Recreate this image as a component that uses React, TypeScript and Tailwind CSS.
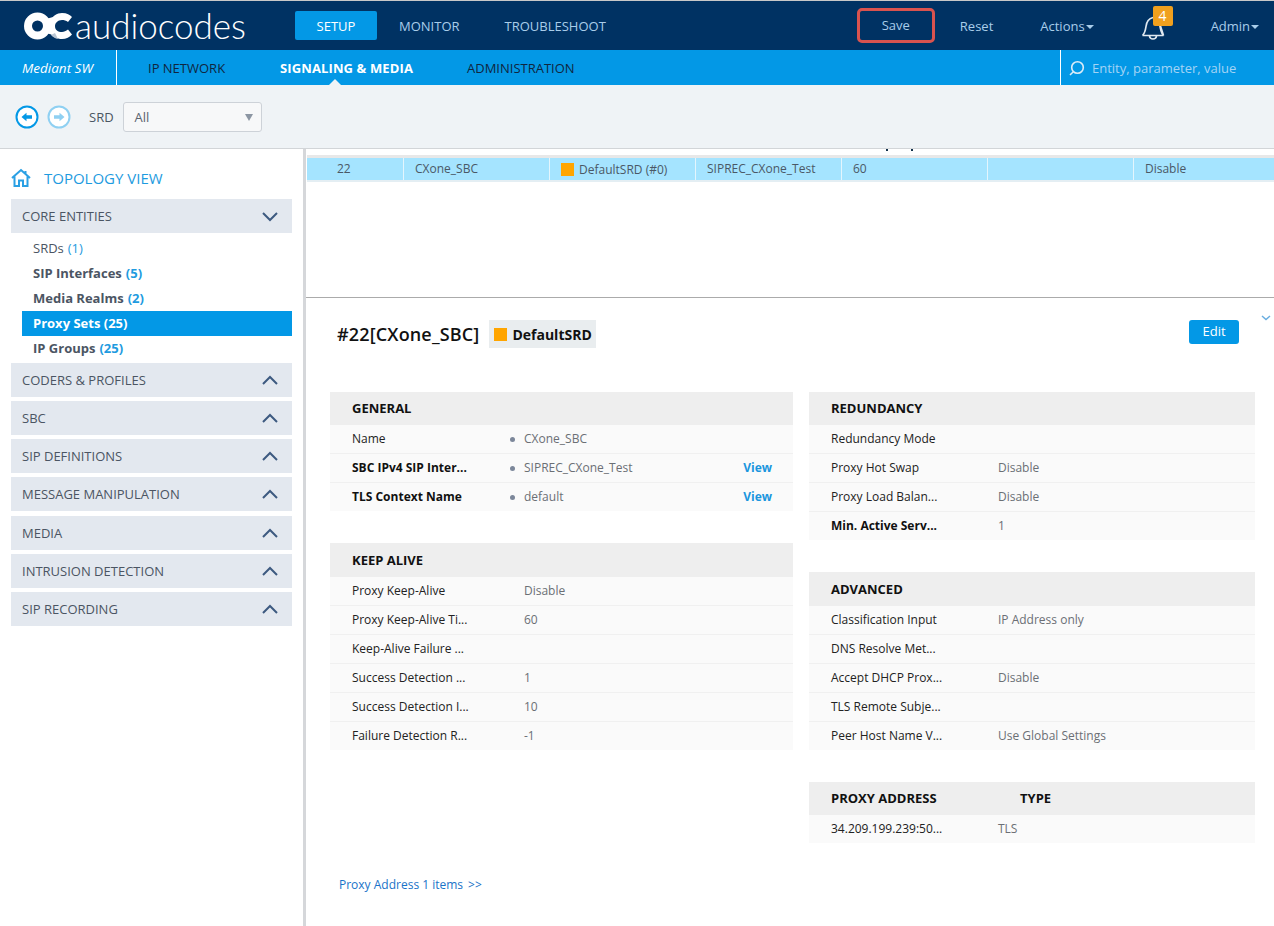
import React from "react";

type Row = { k: string; v?: string; bold?: boolean; dot?: boolean; view?: boolean };

const Chevron = ({ up }: { up: boolean }) => (
  <svg width="16" height="10" viewBox="0 0 16 10" fill="none" stroke="#3d5a80" strokeWidth="2" className={up ? "-mt-[2px]" : ""}>
    <path d={up ? "M1 9 L8 2 L15 9" : "M1 1 L8 8 L15 1"} />
  </svg>
);

const Logo = () => (
  <div className="flex items-center w-[222px]">
    <svg width="50" height="28" viewBox="0 0 50 28" className="shrink-0">
      <circle cx="13.500" cy="14" r="9.500" fill="none" stroke="#fff" strokeWidth="8" />
      <path d="M22 7 L29 5 L27 14 L29 23 L22 21 Z" fill="#fff" />
      <path d="M26 10 C28 4 33 1 38 1 C43 1 46 3 48 5 L44 10 C42 8.500 40 8 38 8 C34 8 31 11 31 14 C31 18 34 20 38 20 C40 20 42 19 44 17.500 L48 22.500 C46 25 42 27 38 27 C33 27 28 25 26 20 Z" fill="#fff" />
      <path d="M27 23 C29 25 31 26.500 34 27 L31 21 Z" fill="#b9c6d4" />
    </svg>
    <span className="font-['Lato'] font-light text-[35px] leading-none text-white ml-[1px] -mt-[1px]">audiocodes</span>
  </div>
);

const Section = ({ title, rows, cols }: { title: React.ReactNode; rows: Row[]; cols: string }) => (
  <div>
    <div className="h-[33.5px] bg-[#eeeeee] flex items-center pl-[22px] pt-[1px] text-[13px] font-bold text-[#111]">{title}</div>
    {rows.map((r, i) => (
      <div key={r.k} className={`bg-[#fafafa] flex items-center pl-[22px] text-[12px] ${i < rows.length - 1 ? "h-[29px] border-b border-[#f0f0f0]" : "h-[28px]"}`}>
        <div className={`${cols} shrink-0 ${r.bold ? "font-bold text-[#111]" : "text-[#222]"}`}>{r.k}</div>
        {r.dot && <span className="w-[5px] h-[5px] rounded-full bg-[#7c879a] mr-[9px] shrink-0" />}
        <div className="text-[#6b6f75] flex-1">{r.v}</div>
        {r.view && <div className="font-bold text-[#1a96de] pr-[21px]">View</div>}
      </div>
    ))}
  </div>
);

const cells: { w: string; node: React.ReactNode }[] = [
  { w: "w-[97px] pl-[30px]", node: "22" },
  { w: "w-[146px] pl-[11px]", node: "CXone_SBC" },
  {
    w: "w-[146px] pl-[11px]",
    node: (
      <span className="flex items-center">
        <span className="w-[13px] h-[13px] bg-[#ffa500] mr-[5px]" />
        <span className="mt-[1px]">DefaultSRD (#0)</span>
      </span>
    ),
  },
  { w: "w-[146px] pl-[11px]", node: "SIPREC_CXone_Test" },
  { w: "w-[146px] pl-[11px]", node: "60" },
  { w: "w-[146px]", node: "" },
  { w: "flex-1 pl-[11px]", node: "Disable" },
];

export default function App() {
  const others = ["CODERS & PROFILES", "SBC", "SIP DEFINITIONS", "MESSAGE MANIPULATION", "MEDIA", "INTRUSION DETECTION", "SIP RECORDING"];
  const navItems = [
    { label: "SIP Interfaces", n: "(5)" },
    { label: "Media Realms", n: "(2)" },
  ];
  return (
    <div className="w-[1274px] h-[926px] overflow-hidden bg-white font-['Open_Sans',sans-serif] flex flex-col border-t border-[#c8c8c8]">
      {/* top bar */}
      <header className="h-[49px] shrink-0 bg-[#003263] flex items-center pl-[24px] text-[13px] text-[#a9cdea]">
        <Logo />
        <div className="ml-[49px] w-[82px] h-[29px] rounded-[2px] bg-[#0398e6] flex items-center justify-center pt-[2px] text-white">SETUP</div>
        <div className="ml-[22px] pt-[2px]">MONITOR</div>
        <div className="ml-[45px] pt-[2px]">TROUBLESHOOT</div>
        <div className="ml-[251px] w-[78px] h-[35px] rounded-[5px] border-[3px] border-[#d9534f] flex items-center justify-center">Save</div>
        <div className="ml-[25px] pt-[2px]">Reset</div>
        <div className="ml-[47px] pt-[2px] flex items-center">
          Actions
          <span className="ml-[1px] w-0 h-0 border-x-[4px] border-x-transparent border-t-[4px] border-t-[#a9cdea]" />
        </div>
        <div className="ml-[47px] relative w-[24px] h-[24px] mt-[4px]">
          <svg width="24" height="24" viewBox="0 0 24 24" fill="none" stroke="#dfe8f0" strokeWidth="1.700">
            <path d="M1.500 19.500 C4 17 4.500 14 5 10.500 C5.500 6 8 2.500 12 1.500 M18.500 7 C19 12 19.500 16.500 22.500 19.500 Z M1.500 19.500 H22.500" />
            <path d="M8.500 20 C9 24 15 24 15.500 20" />
          </svg>
          <div className="absolute -top-[10px] left-[12px] w-[20px] h-[20px] rounded-[2px] bg-[#f0a01e] text-white text-[14px] flex items-center justify-center">4</div>
        </div>
        <div className="ml-[46px] pt-[2px] flex items-center">
          Admin
          <span className="ml-[1px] w-0 h-0 border-x-[4px] border-x-transparent border-t-[4px] border-t-[#a9cdea]" />
        </div>
      </header>

      {/* sub bar */}
      <div className="h-[35px] shrink-0 bg-[#0398e6] flex text-[13px] text-[#10263f]">
        <div className="w-[117px] border-r border-white flex items-center pl-[22px] pt-[2px] italic text-white text-[13.500px]">Mediant SW</div>
        <div className="flex items-center pl-[31px] pt-[2px] w-[163px]">IP NETWORK</div>
        <div className="flex items-center pt-[2px] relative w-[187px] font-bold text-white tracking-[0.12px]">
          SIGNALING &amp; MEDIA
          <span className="absolute bottom-0 left-[49px] w-0 h-0 border-x-[6px] border-x-transparent border-b-[6px] border-b-[#eff3f6]" />
        </div>
        <div className="flex items-center pt-[2px] w-[593px]">ADMINISTRATION</div>
        <div className="flex-1 border-l border-white flex items-center pl-[7px] pt-[2px] text-[#a3d4f5]">
          <svg width="17" height="17" viewBox="0 0 17 17" fill="none" stroke="#dcecf8" strokeWidth="1.600" className="mr-[7px]">
            <circle cx="9.500" cy="7.500" r="5.800" />
            <path d="M5.300 11.800 L2 15" />
          </svg>
          Entity, parameter, value
        </div>
      </div>

      {/* toolbar */}
      <div className="h-[64px] shrink-0 bg-[#eff3f6] border-b border-[#d2d5d8] flex items-center pl-[15px] pt-[1px]">
        <svg width="24" height="24" viewBox="0 0 24 24" className="shrink-0">
          <circle cx="12" cy="12" r="10.500" fill="#fff" stroke="#0398e6" strokeWidth="2" />
          <path d="M6.500 12 L11.500 7.800 V10.300 H17 V13.700 H11.500 V16.200 Z" fill="#0398e6" />
        </svg>
        <svg width="24" height="24" viewBox="0 0 24 24" className="shrink-0 ml-[8px]">
          <circle cx="12" cy="12" r="10.500" fill="#fff" stroke="#8fd0f2" strokeWidth="2" />
          <path d="M17.500 12 L12.500 7.800 V10.300 H7 V13.700 H12.500 V16.200 Z" fill="#8fd0f2" />
        </svg>
        <span className="ml-[18px] pt-[2px] text-[13px] text-[#4a5662]">SRD</span>
        <div className="ml-[9px] w-[139px] h-[30px] rounded-[3px] border border-[#cdd2d8] bg-[#f7f8f9] flex items-center pl-[11px] pr-[8px] text-[13px] text-[#5a6470] justify-between">
          <span className="pt-[1px]">All</span>
          <span className="w-0 h-0 border-x-[4px] border-x-transparent border-t-[7px] border-t-[#8c96a3]" />
        </div>
      </div>

      <div className="flex-1 flex min-h-0">
        {/* sidebar */}
        <aside className="w-[303px] shrink-0 pl-[11px] pr-[11px] flex flex-col">
          <div className="h-[50px] flex items-center pt-[9px] text-[15px] text-[#1e9be0]">
            <svg width="20" height="19" viewBox="0 0 20 19" fill="none" stroke="#2aa0e4" strokeWidth="2" className="mr-[13px] -mt-[2px]">
              <path d="M1 10 L10 2 L19 10 M3.500 8.500 V18 H8 V12.500 H12 V18 H16.500 V8.500 M14.500 3 V5.500" />
            </svg>
            TOPOLOGY VIEW
          </div>
          <div className="h-[34px] bg-[#e3e8ef] flex items-center justify-between pl-[11px] pr-[14px] pt-[1px] text-[13px] text-[#4b5563]">
            CORE ENTITIES
            <Chevron up={false} />
          </div>
          <div className="mt-[3px] pl-[11px] flex flex-col text-[13px] text-[#4b5563]">
            <div className="h-[25px] pl-[11px] flex items-center">
              SRDs<span className="ml-[4px] text-[#1e9be0]">(1)</span>
            </div>
            {navItems.map((n) => (
              <div key={n.label} className="h-[25px] pl-[11px] flex items-center font-bold">
                {n.label}
                <span className="ml-[4px] text-[#1e9be0]">{n.n}</span>
              </div>
            ))}
            <div className="h-[25px] pl-[11px] flex items-center font-bold text-white bg-[#0398e6]">Proxy Sets (25)</div>
            <div className="h-[25px] pl-[11px] flex items-center font-bold">
              IP Groups<span className="ml-[4px] text-[#1e9be0]">(25)</span>
            </div>
          </div>
          <div className="mt-[2px] flex flex-col gap-[4px]">
            {others.map((t) => (
              <div key={t} className={`h-[34px] bg-[#e3e8ef] flex items-center justify-between pl-[11px] pr-[14px] pt-[1px] text-[13px] text-[#4b5563] ${t === "MEDIA" ? "mt-[1px]" : ""}`}>
                {t}
                <Chevron up />
              </div>
            ))}
          </div>
        </aside>

        {/* main */}
        <main className="flex-1 min-w-0 border-l-[3px] border-[#d5d7da] flex flex-col">
          <div className="h-[149px] shrink-0 border-b border-[#ababab] pl-[1px]">
            <div className="h-[2px] flex">
              <span className="ml-[579px] w-[2px] bg-[#12304a]" />
              <span className="ml-[23px] w-[2px] bg-[#12304a]" />
            </div>
            <div className="h-[3px] mt-[1px] bg-white" />
            <div className="h-[3px] bg-[#e8e8e8]" />
            <div className="h-[24px] bg-[#a5e4ff] border-b-[2px] border-[#e4eef3] flex text-[12px] text-[#4a5866]">
              {cells.map((c, i) => (
                <div key={i} className={`${c.w} flex items-center ${i < cells.length - 1 ? "border-r-[1px] border-[#e4f5fd]" : ""}`}>
                  {c.node}
                </div>
              ))}
            </div>
          </div>

          <div className="pl-[24px] pr-[19px] relative">
            <div className="h-[93.700px] flex items-start pt-[22px] pl-[7px]">
              <div className="text-[18px] font-semibold text-[#111] leading-[28px] tracking-[0.15px]">#22[CXone_SBC]</div>
              <div className="ml-[10px] h-[28px] w-[107px] bg-[#e9edef] flex items-center pl-[5px] text-[14px] font-bold text-[#111]">
                <span className="w-[13px] h-[13px] bg-[#ffa500] mr-[5px]" />
                DefaultSRD
              </div>
              <div className="ml-auto mr-[16px] w-[50px] h-[24px] rounded-[3px] bg-[#0398e6] text-white text-[13px] flex items-center justify-center">Edit</div>
            </div>
            <svg width="10" height="6" viewBox="0 0 10 6" fill="none" stroke="#6aaee0" strokeWidth="1.500" className="absolute right-[3px] top-[17px]">
              <path d="M1 1 L5 4.500 L9 1" />
            </svg>

            <div className="flex gap-[16px] items-start">
              <div className="w-[463px] flex flex-col gap-[32px]">
                <Section
                  title="GENERAL"
                  cols="w-[158px]"
                  rows={[
                    { k: "Name", v: "CXone_SBC", dot: true },
                    { k: "SBC IPv4 SIP Inter...", v: "SIPREC_CXone_Test", bold: true, dot: true, view: true },
                    { k: "TLS Context Name", v: "default", bold: true, dot: true, view: true },
                  ]}
                />
                <Section
                  title="KEEP ALIVE"
                  cols="w-[172px]"
                  rows={[
                    { k: "Proxy Keep-Alive", v: "Disable" },
                    { k: "Proxy Keep-Alive Ti...", v: "60" },
                    { k: "Keep-Alive Failure ..." },
                    { k: "Success Detection ...", v: "1" },
                    { k: "Success Detection I...", v: "10" },
                    { k: "Failure Detection R...", v: "-1" },
                  ]}
                />
              </div>
              <div className="w-[446px] flex flex-col gap-[32px]">
                <Section
                  title="REDUNDANCY"
                  cols="w-[167px]"
                  rows={[
                    { k: "Redundancy Mode" },
                    { k: "Proxy Hot Swap", v: "Disable" },
                    { k: "Proxy Load Balan...", v: "Disable" },
                    { k: "Min. Active Serv...", v: "1", bold: true },
                  ]}
                />
                <Section
                  title="ADVANCED"
                  cols="w-[167px]"
                  rows={[
                    { k: "Classification Input", v: "IP Address only" },
                    { k: "DNS Resolve Met..." },
                    { k: "Accept DHCP Prox...", v: "Disable" },
                    { k: "TLS Remote Subje..." },
                    { k: "Peer Host Name V...", v: "Use Global Settings" },
                  ]}
                />
                <Section
                  title={
                    <>
                      <span className="w-[189px]">PROXY ADDRESS</span>
                      <span>TYPE</span>
                    </>
                  }
                  cols="w-[167px]"
                  rows={[{ k: "34.209.199.239:50...", v: "TLS" }]}
                />
              </div>
            </div>
            <div className="mt-[33px] ml-[9px] text-[12px] text-[#1a73c8]">
              Proxy Address 1 items<span className="ml-[5px]">&gt;&gt;</span>
            </div>
          </div>
        </main>
      </div>
    </div>
  );
}
